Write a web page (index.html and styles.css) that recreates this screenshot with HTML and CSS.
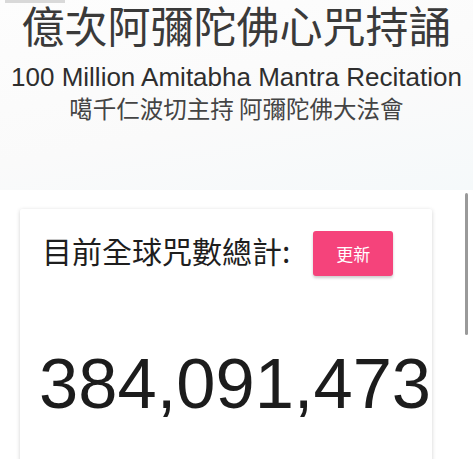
FILE: index.html
```html
<!DOCTYPE html>
<html lang="zh-Hant">
<head>
    <meta charset="UTF-8">
    <meta name="viewport" content="width=device-width, initial-scale=1.0">
    <title>億次阿彌陀佛心咒持誦</title>
    <link rel="stylesheet" href="styles.css">
</head>
<body>
    <div class="header">
        <div class="tab-mark"></div>
        <h1 class="title">億次阿彌陀佛心咒持誦</h1>
        <div class="subtitle">100 Million Amitabha Mantra Recitation</div>
        <div class="host">噶千仁波切主持 阿彌陀佛大法會</div>
    </div>

    <div class="main">
        <div class="card">
            <div class="card-head">
                <span class="card-label">目前全球咒數總計:</span>
                <button class="refresh-btn" id="refreshBtn">更新</button>
            </div>
            <div class="count" id="totalCount">384,091,473</div>
        </div>
        <div class="scroll-track"><div class="scroll-thumb"></div></div>
    </div>
</body>
</html>
```

FILE: styles.css
```css
body {
    margin: 0;
    font-family: "Liberation Sans", "Noto Sans CJK TC", sans-serif;
    background-color: #ffffff;
    color: #222;
    overflow: hidden;
}

.header {
    position: relative;
    height: 190px;
    text-align: center;
    background: linear-gradient(170deg, #fdfdfd 0%, #fafafa 60%, #f5f9fa 100%);
}

.tab-mark {
    position: absolute;
    left: 5px;
    top: 0;
    width: 60px;
    height: 3px;
    background-color: #d9d9d9;
}

.title {
    margin: 0;
    font-family: "Noto Sans CJK TC", sans-serif;
    font-weight: 400;
    font-size: 43px;
    line-height: 48px;
    color: #3a3a3a;
}

.subtitle {
    margin-top: 14px;
    font-size: 26px;
    line-height: 30px;
    color: #2e2e2e;
}

.host {
    margin-top: 0;
    font-family: "Noto Sans CJK TC", sans-serif;
    font-size: 23.5px;
    line-height: 32px;
    color: #444;
}

.main {
    display: flex;
    align-items: flex-start;
    padding: 19px 0 0 20px;
}

.card {
    width: 412px;
    height: 260px;
    background-color: #ffffff;
    box-shadow: 0 1px 4px rgba(0, 0, 0, 0.18);
    border-radius: 2px;
    box-sizing: border-box;
    padding: 19px 0 0 22px;
}

.card-head {
    display: flex;
    align-items: center;
    gap: 23px;
}

.card-label {
    padding-bottom: 6px;
    font-family: "Noto Sans CJK TC", sans-serif;
    font-size: 30px;
    color: #1e1e1e;
}

.refresh-btn {
    width: 80px;
    height: 45px;
    border: none;
    border-radius: 3px;
    background-color: #f5437b;
    color: #ffffff;
    font-family: "Noto Sans CJK TC", sans-serif;
    font-size: 17px;
    box-shadow: 0 2px 3px rgba(0, 0, 0, 0.2);
    cursor: pointer;
}

.count {
    margin-top: 66px;
    margin-left: -3px;
    font-size: 70.5px;
    line-height: 80px;
    color: #1c1c1c;
}

.scroll-track {
    margin-left: 33px;
    margin-top: -16px;
    width: 3px;
}

.scroll-thumb {
    height: 142px;
    background-color: #9a9a9a;
    border-radius: 2px;
}
```
